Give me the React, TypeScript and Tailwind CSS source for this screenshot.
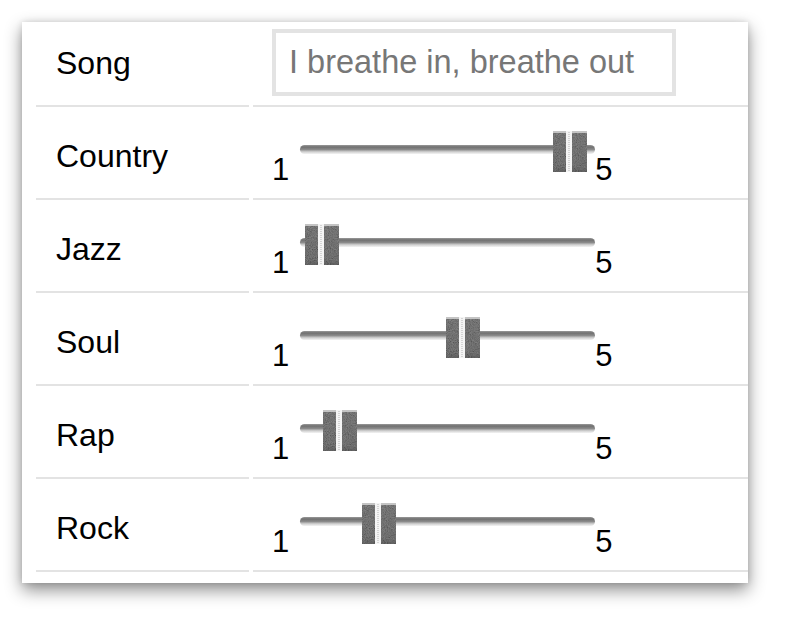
import React from "react";

const genres: { name: string; frac: number }[] = [
  { name: "Country", frac: 1 },
  { name: "Jazz", frac: 0 },
  { name: "Soul", frac: 0.5685 },
  { name: "Rap", frac: 0.0726 },
  { name: "Rock", frac: 0.2298 },
];

function Thumb({ id }: { id: string }) {
  return (
    <svg width="34" height="41" viewBox="0 0 34 41" className="block">
      <defs>
        <filter id={id} x="0" y="0" width="100%" height="100%">
          <feTurbulence type="fractalNoise" baseFrequency="1.1" numOctaves="2" seed="5" />
          <feColorMatrix
            type="matrix"
            values="1 0 0 0 0  1 0 0 0 0  1 0 0 0 0  0 0 0 0 1"
          />
        </filter>
        <linearGradient id={id + "g"} x1="0" y1="0" x2="0" y2="1">
          <stop offset="0" stopColor="#4e4e4e" />
          <stop offset="0.85" stopColor="#444" />
          <stop offset="1" stopColor="#2e2e2e" />
        </linearGradient>
      </defs>
      <rect x="0" y="0" width="34" height="41" fill={`url(#${id}g)`} />
      <rect x="0" y="0" width="34" height="41" filter={`url(#${id})`} opacity="0.35" />
      <rect x="0" y="0" width="34" height="2" fill="#c4c4c4" />
      <rect x="13" y="0" width="6" height="41" fill="#f4f4f4" />
      <line x1="16" y1="1" x2="16" y2="41" stroke="#b5b5b5" strokeWidth="1" strokeDasharray="1 1" />
    </svg>
  );
}

function Slider({ frac, id }: { frac: number; id: string }) {
  return (
    <div className="flex items-start pl-[19px]">
      <span className="mt-[47px] text-[31px] leading-[31px] text-black">1</span>
      <div className="relative ml-[11px] mt-[38px] h-[9px] w-[295px] rounded-full bg-[linear-gradient(#9a9a9a,#707070_22%,#8a8a8a_50%,#cfcfcf_75%,#f4f4f4)]">
        <div className="absolute top-[-14px]" style={{ left: `${5 + frac * 248}px` }}>
          <Thumb id={id} />
        </div>
      </div>
      <span className="mt-[47px] text-[31px] leading-[31px] text-black">5</span>
    </div>
  );
}

export default function App() {
  return (
    <div className="min-h-[621px] bg-white pt-[22px] pl-[22px] font-['Liberation_Sans',Arial,sans-serif]">
      <div className="w-[726px] bg-white pl-[14px] pb-[11px] shadow-[0_7px_16px_rgba(0,0,0,0.45),0_0_6px_rgba(0,0,0,0.12)]">
        <div className="grid grid-cols-[213px_495px] gap-x-[4px]">
          <div className="h-[85px] border-b-2 border-[#e3e3e3] pl-[20px] pt-[25px]">
            <span className="text-[32px] leading-[32px] text-black">Song</span>
          </div>
          <div className="h-[85px] border-b-2 border-[#e3e3e3] pl-[19px] pt-[7px]">
            <input
              type="text"
              placeholder="I breathe in, breathe out"
              className="h-[67px] w-[404px] border-4 border-[#e3e3e3] bg-white pl-[13px] text-[32.5px] text-black outline-none placeholder:text-[#777]"
            />
          </div>
          {genres.map((g, i) => (
            <React.Fragment key={g.name}>
              <div className="h-[93px] border-b-2 border-[#e3e3e3] pl-[20px] pt-[33px]">
                <span className="text-[32px] leading-[32px] text-black">{g.name}</span>
              </div>
              <div className="h-[93px] border-b-2 border-[#e3e3e3]">
                <Slider frac={g.frac} id={`thumbnoise${i}`} />
              </div>
            </React.Fragment>
          ))}
        </div>
      </div>
    </div>
  );
}
